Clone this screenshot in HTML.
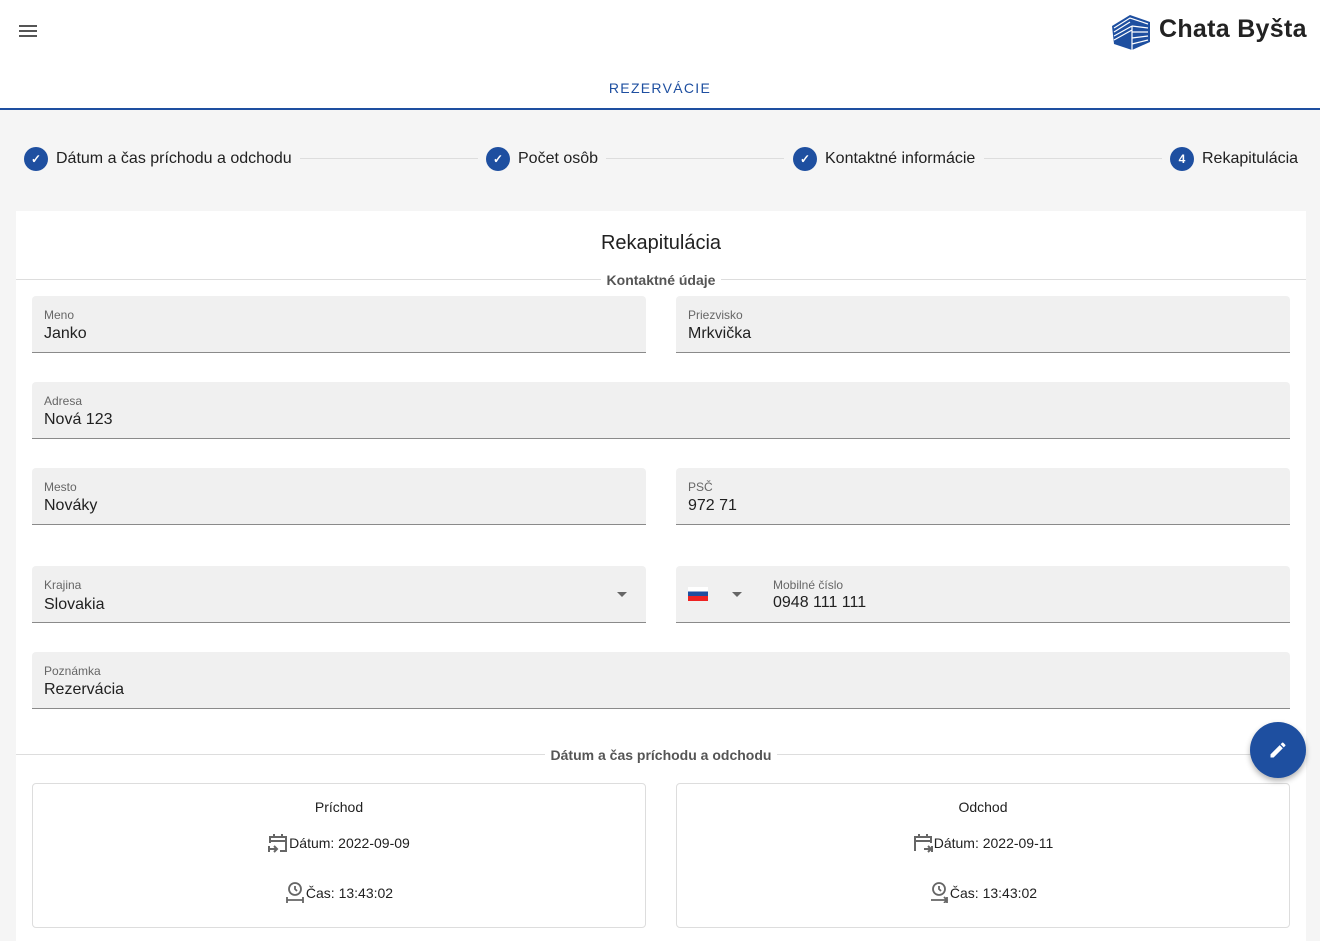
<!DOCTYPE html>
<html><head><meta charset="utf-8"><style>
*{box-sizing:border-box;margin:0;padding:0}
body{width:1320px;height:928px;overflow:hidden;background:#f5f5f5;font-family:"Liberation Sans",sans-serif;color:#212121;position:relative}
.hdr{position:absolute;left:0;top:0;width:1320px;height:110px;background:#fff;border-bottom:2px solid #1e4fa0}
.tab{position:absolute;top:80px;left:0;width:1320px;text-align:center;color:#1e4fa0;font-size:14px;letter-spacing:1.3px}
.step{position:absolute;top:147px;display:flex;align-items:center;font-size:16px;color:#212121}
.ic{width:24px;height:24px;border-radius:50%;background:#1e4fa0;margin-right:8px;display:flex;align-items:center;justify-content:center;color:#fff;font-size:12px;font-weight:bold}
.line{position:absolute;top:158px;height:1px;background:#ddd}
.card{position:absolute;left:16px;top:211px;width:1290px;height:730px;background:#fff}
.f{position:absolute;background:#f0f0f0;border-bottom:1px solid #8a8a8a;border-radius:4px 4px 0 0;height:57px}
.f .l{position:absolute;left:12px;top:12px;font-size:12px;color:#666}
.f .v{position:absolute;left:12px;top:29px;font-size:16px;color:#212121}
.sec{position:absolute;left:0;width:1290px;height:1px;background:#ddd}
.st{position:absolute;left:0;width:1290px;text-align:center;font-size:14px;font-weight:bold;color:#555}
.st span{background:#fff;padding:0 6px}
.box{position:absolute;top:572px;width:614px;height:145px;border:1px solid #ddd;border-radius:4px;font-size:14px;text-align:center}
.box svg{vertical-align:-5px;margin-right:1px}
</style></head><body>
<div class="hdr">
<svg style="position:absolute;left:18px;top:23px" width="20" height="16" viewBox="0 0 20 16"><path d="M1 3h18M1 8h18M1 13h18" stroke="#555" stroke-width="2"/></svg>
<svg style="position:absolute;left:1110px;top:12px" width="42" height="40" viewBox="0 0 42 40"><path d="M2 14L20 3L40 10L40 30L22 38L4 32Z" fill="#1e4fa0"/><path d="M4 16L20 6L38 12M4 20L20 10M4 24L22 14M4 28L22 18M22 14L38 16M22 20L38 20M22 26L38 24M22 32L38 28M22 14V38" stroke="#fff" stroke-width="1.2" fill="none"/></svg>
<div style="position:absolute;left:1159px;top:15px;font-size:25px;font-weight:bold;color:#222;white-space:nowrap;letter-spacing:0.3px">Chata Byšta</div>
<div class="tab">REZERVÁCIE</div>
</div>
<div class="step" style="left:24px"><div class="ic">✓</div>Dátum a čas príchodu a odchodu</div>
<div class="line" style="left:300px;width:178px"></div>
<div class="step" style="left:486px"><div class="ic">✓</div>Počet osôb</div>
<div class="line" style="left:606px;width:178px"></div>
<div class="step" style="left:793px"><div class="ic">✓</div>Kontaktné informácie</div>
<div class="line" style="left:984px;width:178px"></div>
<div class="step" style="left:1170px"><div class="ic">4</div>Rekapitulácia</div>
<div class="card">
<div style="position:absolute;top:21px;width:1290px;text-align:center;font-size:20px">Rekapitulácia</div>
<div class="sec" style="top:68px"></div><div class="st" style="top:61px"><span>Kontaktné údaje</span></div>
<div class="f" style="left:16px;top:85px;width:614px"><div class="l">Meno</div><div class="v">Janko</div></div>
<div class="f" style="left:660px;top:85px;width:614px"><div class="l">Priezvisko</div><div class="v">Mrkvička</div></div>
<div class="f" style="left:16px;top:171px;width:1258px"><div class="l">Adresa</div><div class="v">Nová 123</div></div>
<div class="f" style="left:16px;top:257px;width:614px"><div class="l">Mesto</div><div class="v">Nováky</div></div>
<div class="f" style="left:660px;top:257px;width:614px"><div class="l">PSČ</div><div class="v">972 71</div></div>
<div class="f" style="left:16px;top:355px;width:614px"><div class="l">Krajina</div><div class="v" style="top:30px">Slovakia</div><div style="position:absolute;right:19px;top:26px;border:5px solid transparent;border-top-color:#666"></div></div>
<div class="f" style="left:660px;top:355px;width:614px"><div style="position:absolute;left:12px;top:21px;width:20px;height:14px;background:linear-gradient(#fff 33%,#1e4fa0 33% 66%,#e22 66%)"></div><div style="position:absolute;left:56px;top:26px;border:5px solid transparent;border-top-color:#666"></div><div class="l" style="left:97px">Mobilné číslo</div><div class="v" style="left:97px;top:28px">0948 111 111</div></div>
<div class="f" style="left:16px;top:441px;width:1258px"><div class="l">Poznámka</div><div class="v">Rezervácia</div></div>
<div class="sec" style="top:543px"></div><div class="st" style="top:536px"><span>Dátum a čas príchodu a odchodu</span></div>
<div class="box" style="left:16px"><div style="margin-top:15px">Príchod</div>
<div style="margin-top:18px"><svg width="20" height="20" viewBox="0 0 20 20" fill="none" stroke="#666" stroke-width="2"><path d="M2 10V4h16v14h-6M6 1v4M14 1v4M2 8h16M1 16h7M6 13l3 3-3 3M1 13v6"/></svg>Dátum: 2022-09-09</div>
<div style="margin-top:28px"><svg width="20" height="22" viewBox="0 0 20 22" fill="none" stroke="#666" stroke-width="1.8"><circle cx="10" cy="8" r="6"/><path d="M10 5v3l2 2M2 19h16M2 16v6M18 16v6"/></svg>Čas: 13:43:02</div></div>
<div class="box" style="left:660px"><div style="margin-top:15px">Odchod</div>
<div style="margin-top:18px"><svg width="20" height="20" viewBox="0 0 20 20" fill="none" stroke="#666" stroke-width="2"><path d="M2 18V4h16v6M6 1v4M14 1v4M2 8h16M11 16h7M15 13l3 3-3 3M19 13v6"/></svg>Dátum: 2022-09-11</div>
<div style="margin-top:28px"><svg width="20" height="22" viewBox="0 0 20 22" fill="none" stroke="#666" stroke-width="1.8"><circle cx="10" cy="8" r="6"/><path d="M10 5v3l2 2M2 19h16M15 16l3 3-3 3M18 16v6"/></svg>Čas: 13:43:02</div></div>
</div>
<div style="position:absolute;left:1250px;top:722px;width:56px;height:56px;border-radius:50%;background:#1e4fa0;box-shadow:0 3px 6px rgba(0,0,0,.3)"><svg style="position:absolute;left:18px;top:18px" width="20" height="20" viewBox="0 0 24 24"><path d="M3 17.25V21h3.75L17.8 9.94l-3.75-3.75L3 17.25zM20.7 7.04a1 1 0 000-1.41l-2.34-2.34a1 1 0 00-1.41 0l-1.83 1.83 3.75 3.75 1.83-1.83z" fill="#fff"/></svg></div>
</body></html>
